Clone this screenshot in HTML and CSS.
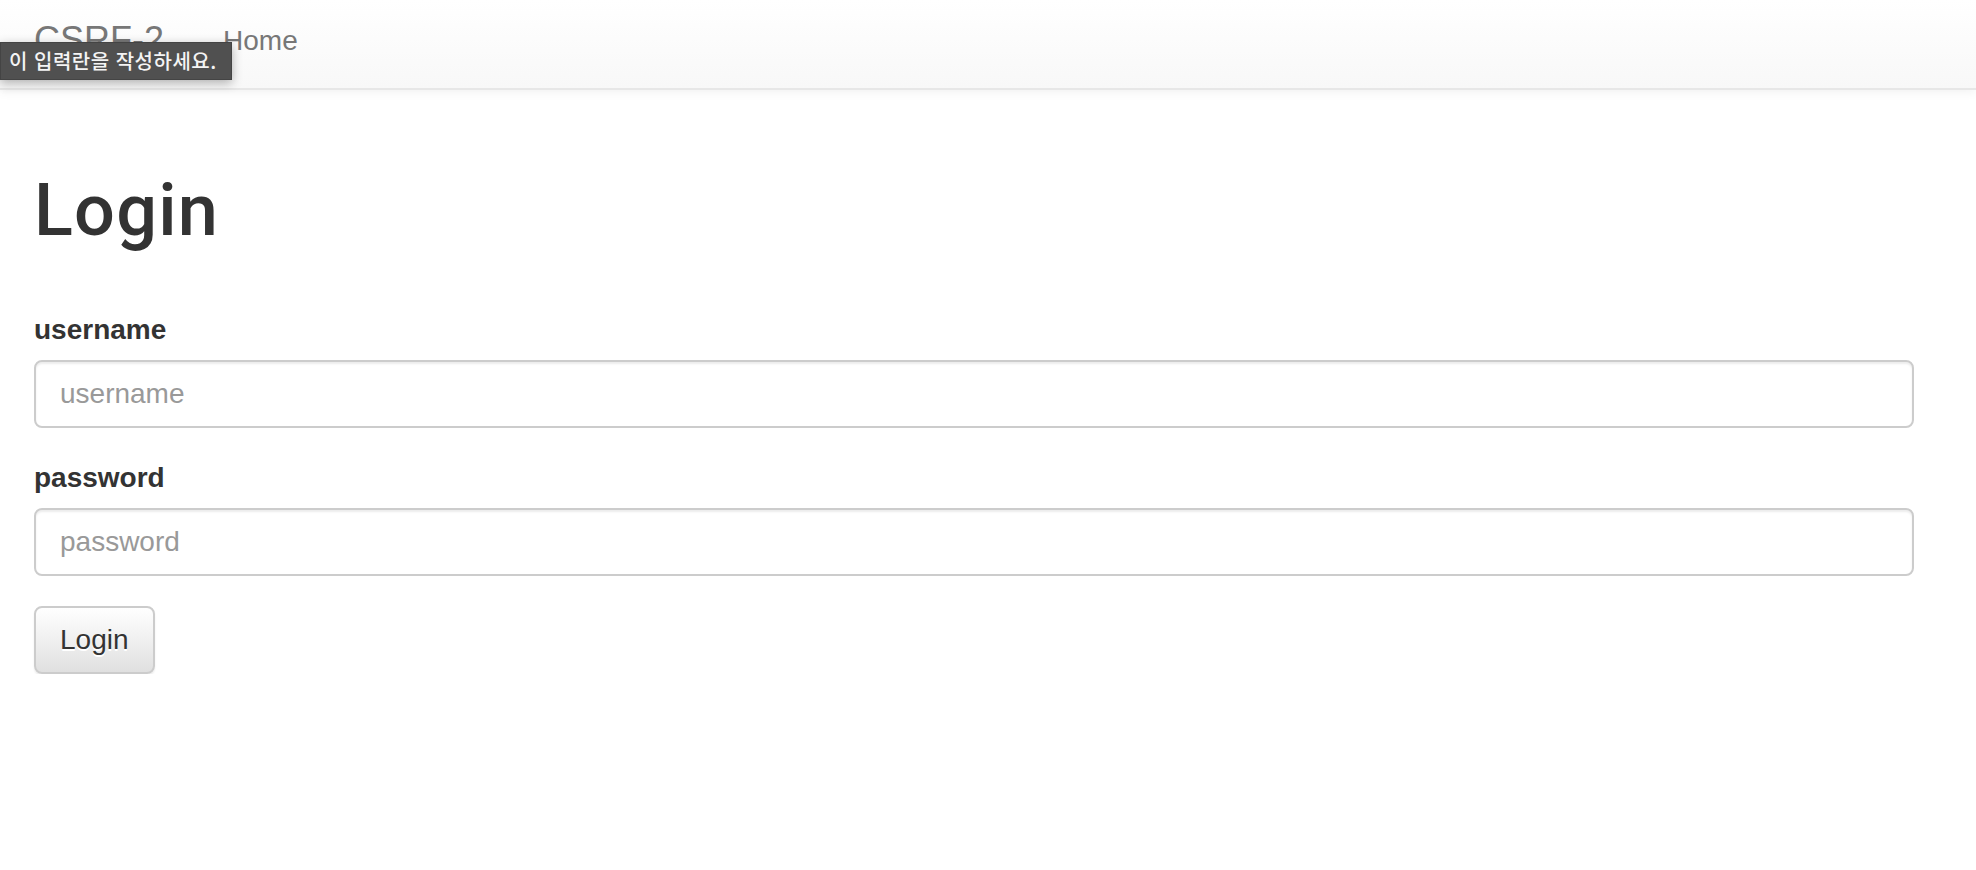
FILE: index.html
```html
<!DOCTYPE html>
<html lang="ko">
<head>
<meta charset="utf-8">
<title>Login</title>
<link rel="stylesheet" href="styles.css">
</head>
<body>
<nav class="navbar">
  <a class="brand" href="#">CSRF-2</a>
  <a class="nav-link" href="#">Home</a>
</nav>
<main class="container">
  <h1 class="title">Login</h1>
  <form class="login-form">
    <div class="form-group">
      <label class="field-label" for="username">username</label>
      <input class="field-input" id="username" type="text" placeholder="username">
    </div>
    <div class="form-group">
      <label class="field-label" for="password">password</label>
      <input class="field-input" id="password" type="password" placeholder="password">
    </div>
    <button class="btn" type="button">Login</button>
  </form>
</main>
<div class="validation-bubble">이 입력란을 작성하세요.</div>
</body>
</html>
```

FILE: styles.css
```css
* { box-sizing: border-box; }

html, body {
  margin: 0;
  padding: 0;
  background: #fff;
}

body {
  position: relative;
  font-family: "Liberation Sans", Arial, sans-serif;
  color: #333;
}

.navbar {
  display: flex;
  align-items: flex-start;
  height: 90px;
  padding-left: 34px;
  background: linear-gradient(to bottom, #ffffff 0%, #f8f8f8 100%);
  border-bottom: 2px solid #e7e7e7;
  box-shadow: inset 0 2px 0 rgba(255,255,255,.15), 0 2px 10px rgba(0,0,0,.06);
}

.brand {
  font-size: 36px;
  line-height: 40px;
  padding-top: 20px;
  color: #777;
  text-decoration: none;
  text-shadow: 0 2px 0 rgba(255,255,255,.25);
}

.nav-link {
  margin-left: 59px;
  font-size: 28px;
  line-height: 40px;
  padding-top: 21px;
  color: #777;
  text-decoration: none;
}

.container {
  padding: 0 34px;
}

.title {
  margin: 81px 0 60px;
  font-family: Roboto, "Liberation Sans", Arial, sans-serif;
  font-size: 72px;
  font-weight: 500;
  letter-spacing: 1.2px;
  line-height: 79px;
  color: #333;
}

.login-form {
  width: 1880px;
}

.form-group {
  margin-bottom: 30px;
}

.field-label {
  display: block;
  margin-bottom: 10px;
  font-size: 28px;
  line-height: 40px;
  font-weight: 700;
  color: #333;
}

.field-input {
  display: block;
  width: 100%;
  height: 68px;
  padding: 12px 24px;
  font-family: "Liberation Sans", Arial, sans-serif;
  font-size: 28px;
  color: #555;
  background: #fff;
  border: 2px solid #ccc;
  border-radius: 8px;
  box-shadow: inset 0 2px 2px rgba(0,0,0,.075);
  outline: none;
}

.field-input::placeholder {
  color: #999;
}

.btn {
  display: block;
  height: 68px;
  padding: 0 24px;
  font-family: "Liberation Sans", Arial, sans-serif;
  font-size: 28px;
  line-height: 40px;
  color: #333;
  text-shadow: 0 2px 0 #fff;
  background: linear-gradient(to bottom, #ffffff 0%, #e0e0e0 100%);
  border: 2px solid #ccc;
  border-radius: 8px;
  box-shadow: inset 0 2px 0 rgba(255,255,255,.15), 0 2px 2px rgba(0,0,0,.075);
}

.validation-bubble {
  position: absolute;
  left: 0;
  top: 42px;
  width: 232px;
  height: 38px;
  padding-left: 8px;
  font-family: "Noto Sans CJK KR", "Noto Sans", sans-serif;
  font-size: 20px;
  font-weight: 500;
  letter-spacing: 0.5px;
  line-height: 35px;
  color: #f4f4f4;
  background: #505050;
  border: 1px solid #444;
  box-shadow: 0 3px 10px rgba(0,0,0,.3);
  white-space: nowrap;
}
```
